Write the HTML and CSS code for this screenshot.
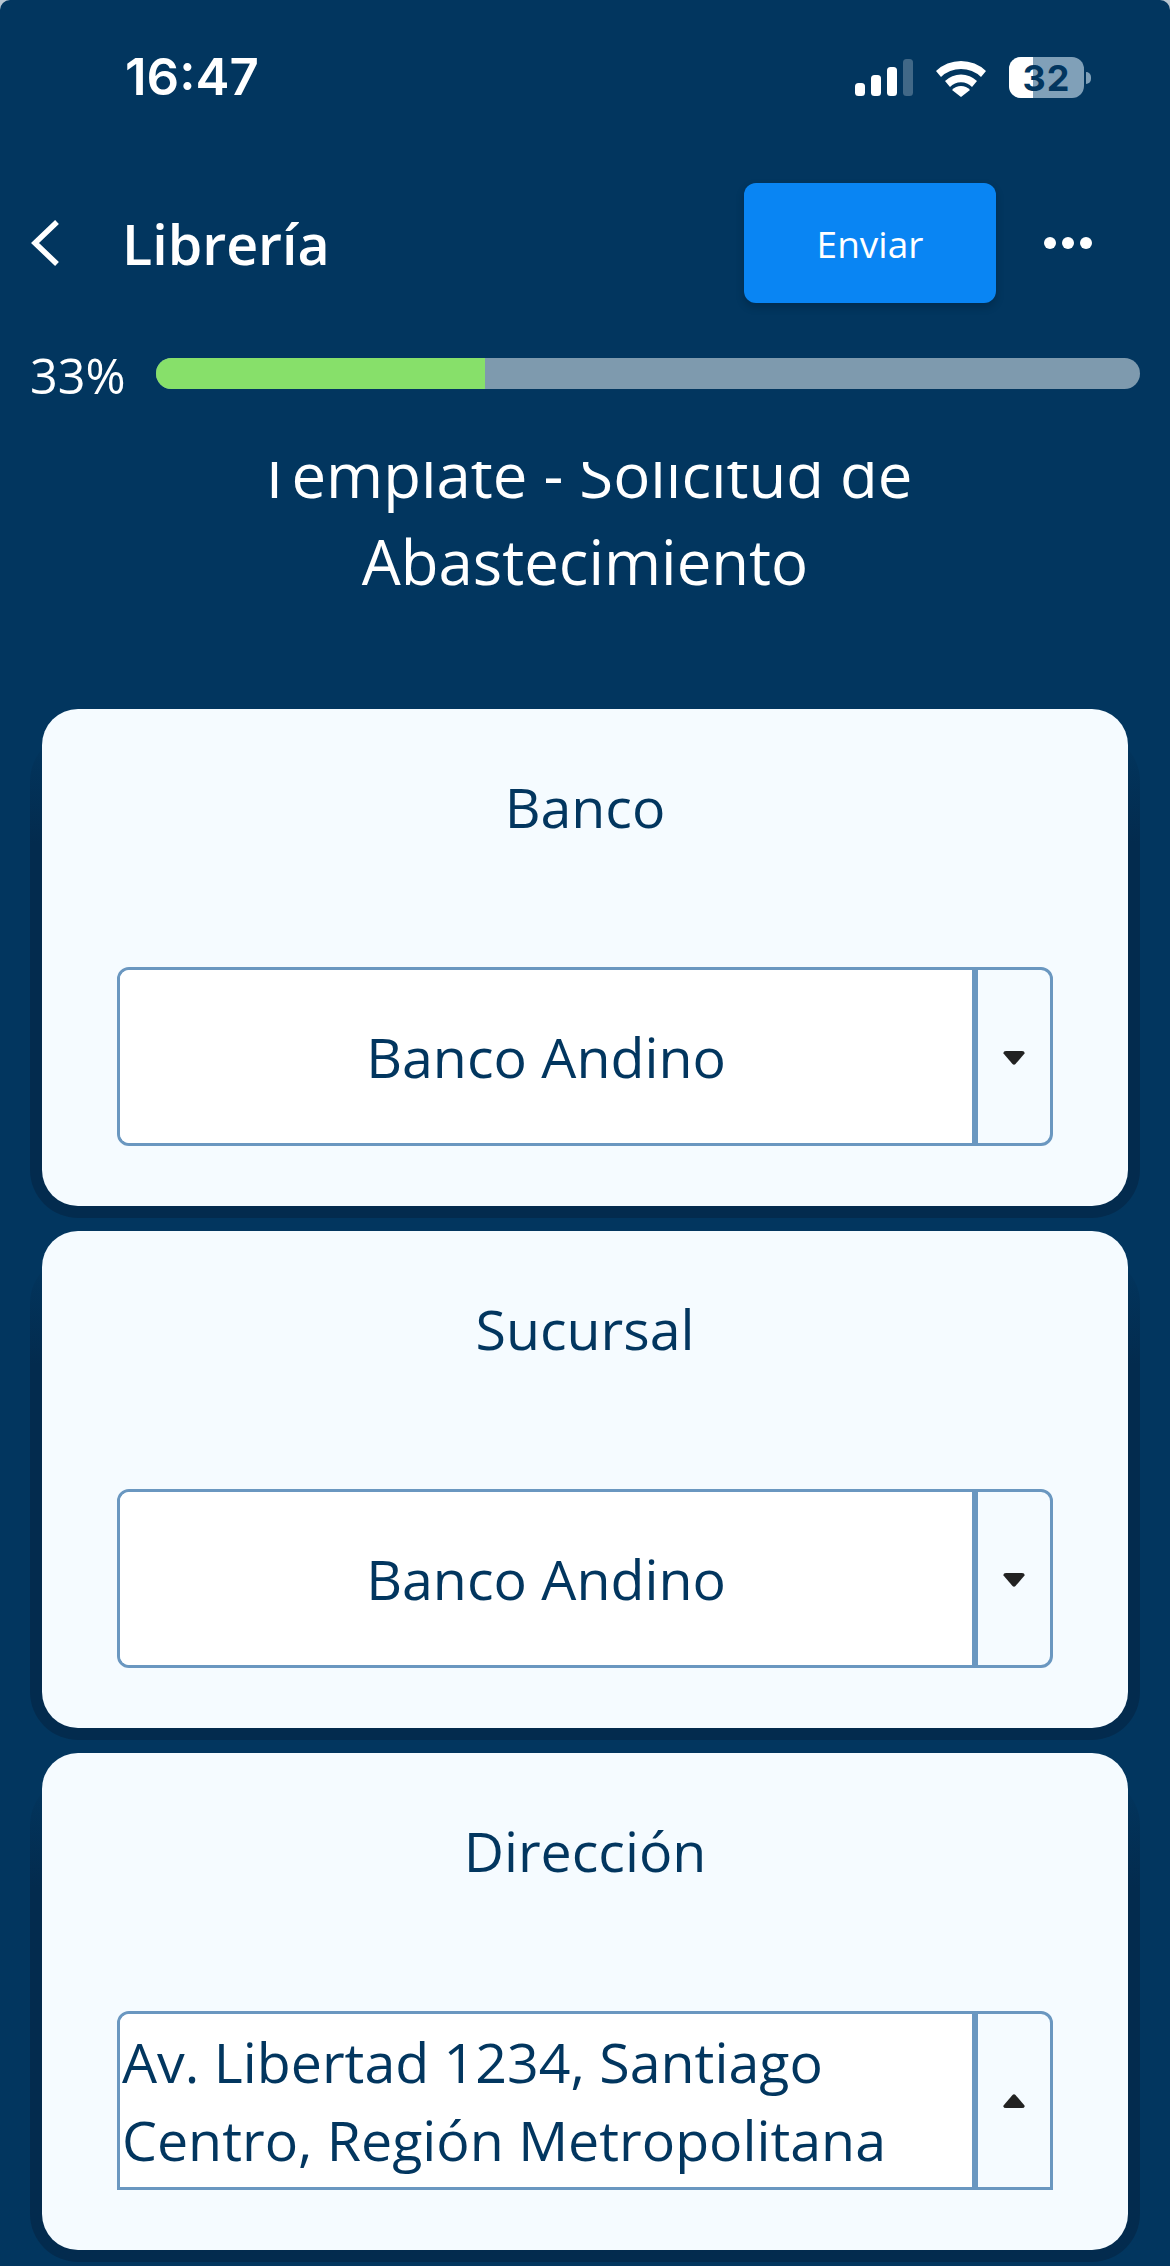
FILE: index.html
```html
<!DOCTYPE html>
<html>
<head>
	<title>Librería</title>
	<link rel="stylesheet" href="styles.css">
</head>
<body>
	<div class="phone">
		<div class="status-bar">
			<span class="clock">16:47</span>
			<div class="status-icons">
				<svg class="signal" width="58" height="37" viewBox="0 0 58 37">
					<rect x="0" y="24" width="10" height="13" rx="3.5" fill="#fff"/>
					<rect x="16" y="16" width="10" height="21" rx="3.5" fill="#fff"/>
					<rect x="32" y="8" width="10" height="29" rx="3.5" fill="#fff"/>
					<rect x="48" y="0" width="10" height="37" rx="3.5" fill="#fff" opacity="0.25"/>
				</svg>
				<svg class="wifi" width="50" height="38" viewBox="0 0 50 38">
					<path d="M0 12 A36 36 0 0 1 50 12 L45 18 A29 29 0 0 0 5 18 Z" fill="#fff"/>
					<path d="M9 22 A23 23 0 0 1 41 22 L36 28 A15 15 0 0 0 14 28 Z" fill="#fff"/>
					<path d="M16 31 A12 12 0 0 1 34 31 L25 38 Z" fill="#fff"/>
				</svg>
				<div class="battery">
					<div class="battery-body">
						<div class="battery-fill"></div>
						<span class="battery-level">32</span>
					</div>
					<div class="battery-cap"></div>
				</div>
			</div>
		</div>

		<div class="top-bar">
			<svg class="back" width="34" height="48" viewBox="0 0 34 48">
				<path d="M28 3 L6 24 L28 45" fill="none" stroke="#fff" stroke-width="5.5"/>
			</svg>
			<h1 class="top-title">Librería</h1>
			<button class="send-btn">Enviar</button>
			<div class="more"><i></i><i></i><i></i></div>
		</div>

		<div class="progress-row">
			<span class="progress-text">33%</span>
			<div class="progress"><div class="progress-fill"></div></div>
		</div>

		<div class="content">
			<h2 class="form-title">Template - Solicitud de Abastecimiento</h2>

			<div class="card">
				<div class="card-label">Banco</div>
				<div class="select">
					<div class="select-value">Banco Andino</div>
					<div class="select-arrow">
						<svg class="arrow-down" width="22" height="14" viewBox="0 0 22 14"><path d="M3 0 H19 Q22 0 21.5 2.5 L12.5 13 Q11 14.5 9.5 13 L0.5 2.5 Q0 0 3 0 Z" fill="#222"/></svg>
					</div>
				</div>
			</div>

			<div class="card">
				<div class="card-label">Sucursal</div>
				<div class="select">
					<div class="select-value">Banco Andino</div>
					<div class="select-arrow">
						<svg class="arrow-down" width="22" height="14" viewBox="0 0 22 14"><path d="M3 0 H19 Q22 0 21.5 2.5 L12.5 13 Q11 14.5 9.5 13 L0.5 2.5 Q0 0 3 0 Z" fill="#222"/></svg>
					</div>
				</div>
			</div>

			<div class="card">
				<div class="card-label">Dirección</div>
				<div class="select select-open">
					<div class="select-value select-long">Av. Libertad 1234, Santiago Centro, Región Metropolitana</div>
					<div class="select-arrow">
						<svg width="22" height="14" viewBox="0 0 22 14"><path d="M3 14 H19 Q22 14 21.5 11.5 L12.5 1 Q11 -0.5 9.5 1 L0.5 11.5 Q0 14 3 14 Z" fill="#222"/></svg>
					</div>
				</div>
			</div>
		</div>
	</div>
</body>
</html>
```

FILE: styles.css
```css
html, body {
	margin: 0;
	padding: 0;
	background-color: #b9c6d1;
}

.phone {
	width: 1170px;
	height: 2266px;
	overflow: hidden;
	border-radius: 10px 10px 0 0;
	background-color: #02365f;
	font-family: "Open Sans", sans-serif;
	color: #fff;
	display: flex;
	flex-direction: column;
}

/* Status bar */
.status-bar {
	height: 158px;
	flex: none;
	display: flex;
	justify-content: space-between;
	align-items: flex-start;
	padding: 48px 79px 0 125px;
	box-sizing: border-box;
}

.clock {
	font-family: Inter, sans-serif;
	font-weight: 600;
	font-size: 51px;
	line-height: 58px;
}

.status-icons {
	display: flex;
	align-items: center;
	gap: 23px;
	margin-top: 9px;
}

.battery {
	display: flex;
	align-items: center;
	gap: 2px;
}

.battery-body {
	position: relative;
	width: 75px;
	height: 41px;
	border-radius: 12px;
	overflow: hidden;
	background-color: #80a0b8;
	display: flex;
	align-items: center;
	justify-content: center;
}

.battery-fill {
	position: absolute;
	left: 0;
	top: 0;
	bottom: 0;
	width: 24px;
	background-color: #fff;
}

.battery-level {
	position: relative;
	font-family: Inter, sans-serif;
	font-weight: 700;
	font-size: 36px;
	line-height: 36px;
	letter-spacing: 1px;
	color: #02365f;
}

.battery-cap {
	width: 5px;
	height: 12px;
	background-color: #80a0b8;
	border-radius: 0 6px 6px 0;
}

/* Top bar */
.top-bar {
	height: 170px;
	flex: none;
	display: flex;
	align-items: center;
	padding: 0 78px 0 29px;
	box-sizing: border-box;
}

.back {
	flex: none;
}

.top-title {
	flex: 1;
	margin: 0 0 0 59px;
	font-size: 55.5px;
	font-weight: 600;
}

.send-btn {
	width: 252px;
	height: 120px;
	border: 0;
	border-radius: 12px;
	background-color: #0985f3;
	color: #fff;
	font-family: "Open Sans", sans-serif;
	font-size: 37px;
	box-shadow: 0 4px 8px rgba(0, 0, 0, 0.2);
}

.more {
	display: flex;
	gap: 6px;
	margin-left: 48px;
}

.more i {
	width: 12px;
	height: 12px;
	border-radius: 50%;
	background-color: #fff;
}

/* Progress */
.progress-row {
	height: 62px;
	flex: none;
	display: flex;
	align-items: center;
	margin-top: 14px;
	padding: 0 30px;
	box-sizing: border-box;
	gap: 31px;
}

.progress-text {
	font-size: 48.5px;
	font-weight: 400;
	width: 95px;
	margin-top: 3px;
}

.progress {
	flex: 1;
	height: 31px;
	border-radius: 16px;
	overflow: hidden;
	background-color: #7e9aae;
}

.progress-fill {
	width: 33.4%;
	height: 100%;
	background-color: #87e06a;
}

/* Scrolling content, title gets cut off at the top */
.content {
	flex: 1;
	overflow: hidden;
	margin-top: 58px;
	padding: 0 42px;
	box-sizing: border-box;
	isolation: isolate;
}

.form-title {
	margin: -31px 110px 0;
	height: 278px;
	font-size: 61.7px;
	font-weight: 400;
	line-height: 87px;
	text-align: center;
}

.card {
	position: relative;
	height: 497px;
	margin-bottom: 25px;
	border-radius: 36px;
	background-color: #f5fbff;
	color: #02365f;
}

/* dark band round the sides and bottom of a card */
.card::before {
	content: "";
	position: absolute;
	z-index: -1;
	top: 24px;
	left: -12px;
	right: -12px;
	bottom: -12px;
	border-radius: 48px;
	background: linear-gradient(to bottom, rgba(3, 43, 78, 0), #032b4e 110px);
}

.card-label {
	height: 258px;
	padding-top: 65px;
	box-sizing: border-box;
	font-size: 55.5px;
	line-height: 66px;
	text-align: center;
}

/* Select box */
.select {
	height: 179px;
	margin: 0 75px;
	display: flex;
	border: 3px solid #6a97c0;
	border-radius: 12px;
	box-sizing: border-box;
	overflow: hidden;
}

.select-open {
	border-radius: 12px 12px 0 0;
}

.select-value {
	flex: 1;
	display: flex;
	align-items: center;
	justify-content: center;
	background-color: #fff;
	border-right: 6px solid #6a97c0;
	font-size: 55.5px;
	line-height: 78px;
	text-align: center;
}

.select-long {
	justify-content: flex-start;
	text-align: left;
	padding-left: 2px;
}

.select-arrow {
	width: 72px;
	flex: none;
	display: flex;
	align-items: center;
	justify-content: center;
}

.arrow-down {
	margin-top: 3px;
}
```
